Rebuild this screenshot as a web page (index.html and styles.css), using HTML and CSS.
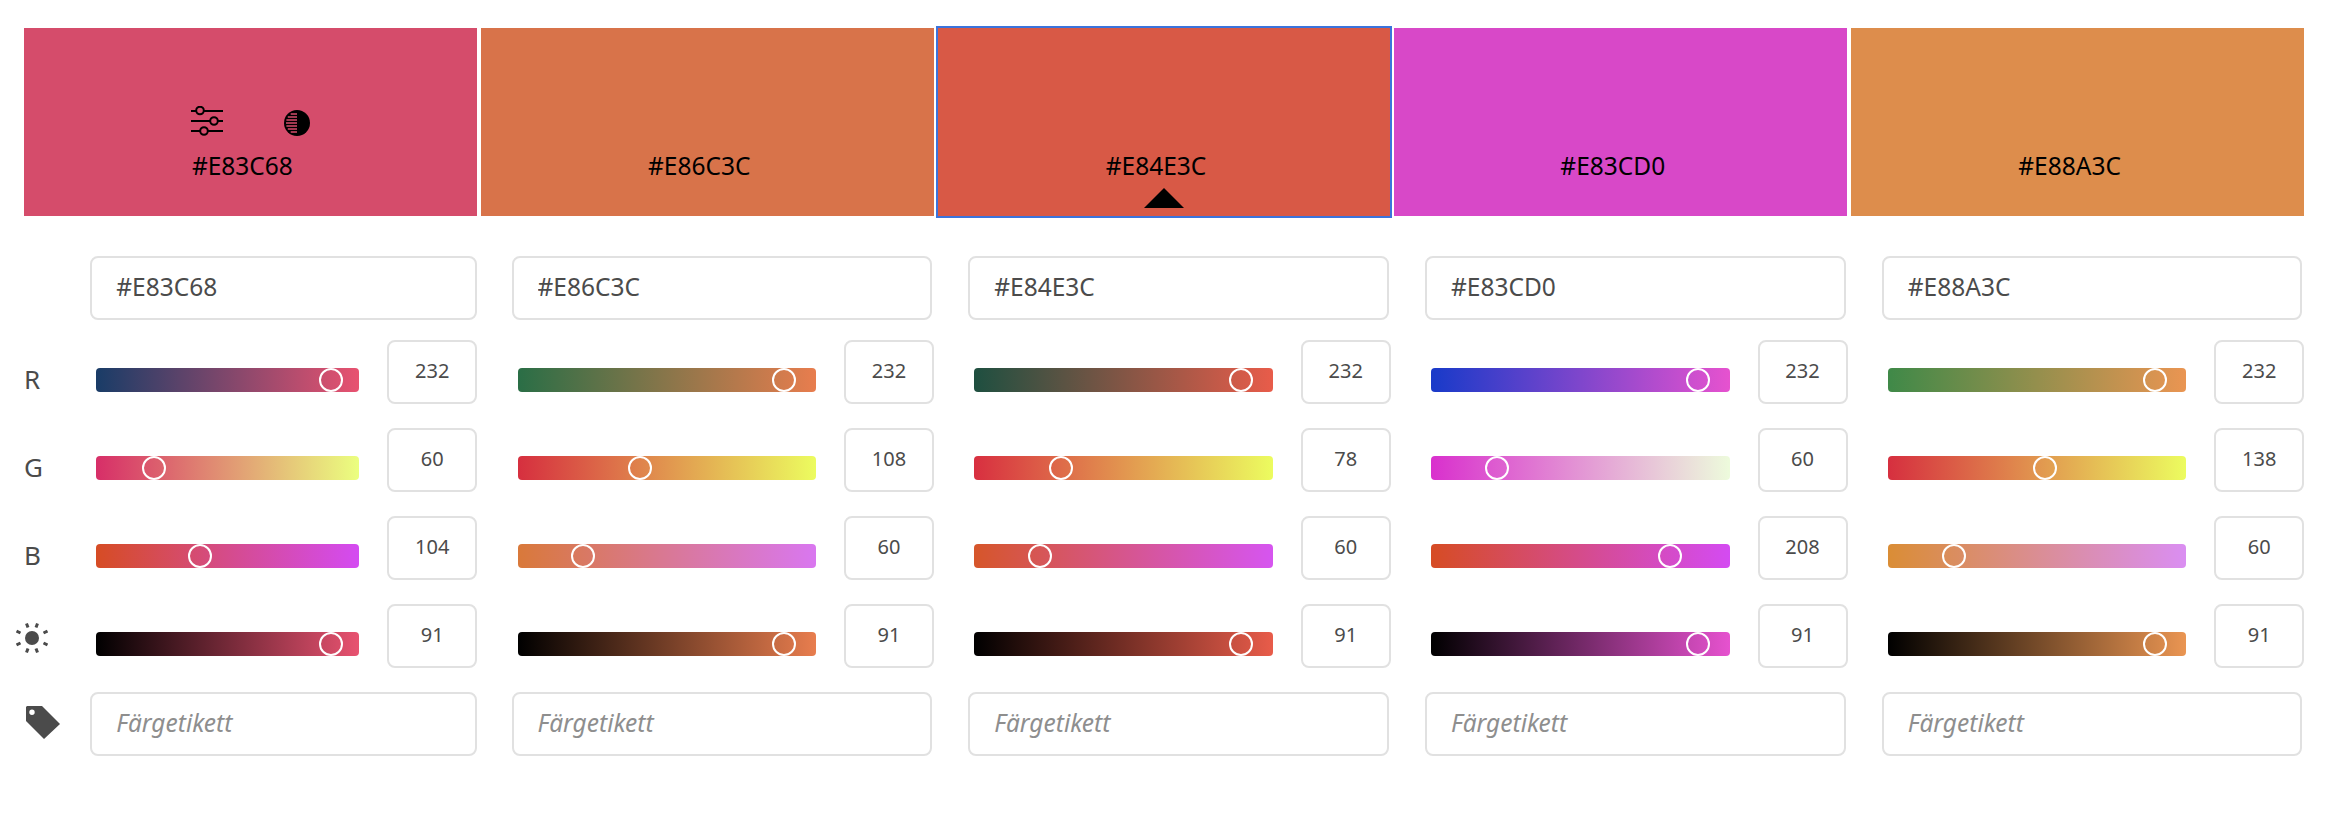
FILE: index.html
```html
<!DOCTYPE html>
<html lang="sv">
<head>
    <meta charset="UTF-8">
    <title>Färgredigerare</title>
    <link rel="stylesheet" href="styles.css">
</head>
<body>
    <div class="swatches">
        <div class="swatch swatch-1">
            <div class="swatch-tools">
                <svg class="tool-icon" width="32" height="30" viewBox="0 0 32 30" fill="none" stroke="#000" stroke-width="2">
                    <path d="M0 5H5M13 5H32M0 15H19M27 15H32M0 25H9M17 25H32"/>
                    <circle cx="9" cy="4.500" r="3.800"/>
                    <circle cx="23" cy="15" r="3.800"/>
                    <circle cx="13" cy="25" r="3.800"/>
                </svg>
                <svg class="tool-icon" width="26" height="26" viewBox="0 0 26 26">
                    <circle cx="13" cy="13" r="13" fill="#000"/>
                    <path d="M6.700 4H13M3.800 7H13M2.400 10H13M2 13H13M2.400 16H13M3.800 19H13M6.700 22H13" stroke="#d54c6b" stroke-width="1.700"/>
                </svg>
            </div>
            <span class="swatch-hex">#E83C68</span>
        </div>
        <div class="swatch swatch-2"><span class="swatch-hex">#E86C3C</span></div>
        <div class="swatch swatch-3 selected"><span class="swatch-hex">#E84E3C</span><span class="caret"></span></div>
        <div class="swatch swatch-4"><span class="swatch-hex">#E83CD0</span></div>
        <div class="swatch swatch-5"><span class="swatch-hex">#E88A3C</span></div>
    </div>

    <div class="editor">
        <div class="labels">
            <div class="row row-hex"></div>
            <div class="row label"><span class="letter">R</span></div>
            <div class="row label"><span class="letter">G</span></div>
            <div class="row label"><span class="letter">B</span></div>
            <div class="row label">
                <svg class="sun-icon" width="32" height="32" viewBox="0 0 32 32" fill="#4b4b4b">
                    <circle cx="16" cy="16" r="7"/>
                    <g stroke="#4b4b4b" stroke-width="3">
                        <path d="M10.500 1.500L12 5.500M21.500 1.500L20 5.500M0.500 9L4.500 11M31.500 9L27.500 11M0.500 23L4.500 21M31.500 23L27.500 21M10.500 30.500L12 26.500M21.500 30.500L20 26.500"/>
                    </g>
                </svg>
            </div>
            <div class="row label">
                <svg class="tag-icon" width="34" height="34" viewBox="0 0 34 34">
                    <path fill="#4b4b4b" fill-rule="evenodd" d="M1 0H16L34 18L18 33L0 15V1ZM6 3.500A2.700 2.700 0 1 0 6 8.900A2.700 2.700 0 1 0 6 3.500Z"/>
                </svg>
            </div>
        </div>

        <div class="col col-1">
            <div class="row row-hex"><input class="field" type="text" value="#E83C68"></div>
            <div class="row"><div class="track r"><span class="thumb" style="left: 89.4%"></span></div><div class="value">232</div></div>
            <div class="row"><div class="track g"><span class="thumb" style="left: 22.1%"></span></div><div class="value">60</div></div>
            <div class="row"><div class="track b"><span class="thumb" style="left: 39.3%"></span></div><div class="value">104</div></div>
            <div class="row"><div class="track l"><span class="thumb" style="left: 89.4%"></span></div><div class="value">91</div></div>
            <div class="row"><input class="field" type="text" placeholder="Färgetikett"></div>
        </div>

        <div class="col col-2">
            <div class="row row-hex"><input class="field" type="text" value="#E86C3C"></div>
            <div class="row"><div class="track r"><span class="thumb" style="left: 89.4%"></span></div><div class="value">232</div></div>
            <div class="row"><div class="track g"><span class="thumb" style="left: 40.9%"></span></div><div class="value">108</div></div>
            <div class="row"><div class="track b"><span class="thumb" style="left: 22.1%"></span></div><div class="value">60</div></div>
            <div class="row"><div class="track l"><span class="thumb" style="left: 89.4%"></span></div><div class="value">91</div></div>
            <div class="row"><input class="field" type="text" placeholder="Färgetikett"></div>
        </div>

        <div class="col col-3">
            <div class="row row-hex"><input class="field" type="text" value="#E84E3C"></div>
            <div class="row"><div class="track r"><span class="thumb" style="left: 89.4%"></span></div><div class="value">232</div></div>
            <div class="row"><div class="track g"><span class="thumb" style="left: 29.1%"></span></div><div class="value">78</div></div>
            <div class="row"><div class="track b"><span class="thumb" style="left: 22.1%"></span></div><div class="value">60</div></div>
            <div class="row"><div class="track l"><span class="thumb" style="left: 89.4%"></span></div><div class="value">91</div></div>
            <div class="row"><input class="field" type="text" placeholder="Färgetikett"></div>
        </div>

        <div class="col col-4">
            <div class="row row-hex"><input class="field" type="text" value="#E83CD0"></div>
            <div class="row"><div class="track r"><span class="thumb" style="left: 89.4%"></span></div><div class="value">232</div></div>
            <div class="row"><div class="track g"><span class="thumb" style="left: 22.1%"></span></div><div class="value">60</div></div>
            <div class="row"><div class="track b"><span class="thumb" style="left: 80%"></span></div><div class="value">208</div></div>
            <div class="row"><div class="track l"><span class="thumb" style="left: 89.4%"></span></div><div class="value">91</div></div>
            <div class="row"><input class="field" type="text" placeholder="Färgetikett"></div>
        </div>

        <div class="col col-5">
            <div class="row row-hex"><input class="field" type="text" value="#E88A3C"></div>
            <div class="row"><div class="track r"><span class="thumb" style="left: 89.4%"></span></div><div class="value">232</div></div>
            <div class="row"><div class="track g"><span class="thumb" style="left: 52.6%"></span></div><div class="value">138</div></div>
            <div class="row"><div class="track b"><span class="thumb" style="left: 22.1%"></span></div><div class="value">60</div></div>
            <div class="row"><div class="track l"><span class="thumb" style="left: 89.4%"></span></div><div class="value">91</div></div>
            <div class="row"><input class="field" type="text" placeholder="Färgetikett"></div>
        </div>
    </div>
</body>
</html>
```

FILE: styles.css
```css
body {
    margin: 0;
    padding: 28px 24px 0;
    background-color: #fff;
    color: #4b4b4b;
    font-family: "Noto Sans", Arial, sans-serif;
}

.swatches {
    display: grid;
    grid-template-columns: repeat(5, 1fr);
    gap: 4px;
    margin-bottom: 40px;
}

.swatch {
    position: relative;
    display: flex;
    flex-direction: column;
    align-items: center;
    justify-content: flex-end;
    height: 188px;
    padding-bottom: 35px;
    box-sizing: border-box;
    color: #000;
}

.swatch-hex {
    margin-right: 16px;
    font-size: 24.5px;
    line-height: 30px;
}

.swatch-tools {
    display: flex;
    gap: 61px;
    align-items: flex-end;
    margin-bottom: 15px;
}

.tool-icon {
    display: block;
}

.swatch-1 { background-color: #d54c6b; }
.swatch-2 { background-color: #d8734a; }
.swatch-3 { background-color: #d85946; }
.swatch-4 { background-color: #d848c8; }
.swatch-5 { background-color: #dd8d4c; }

.selected {
    outline: 2px solid #3b73dc;
}

.caret {
    position: absolute;
    left: 50%;
    bottom: 8px;
    margin-left: -20px;
    border-left: 20px solid transparent;
    border-right: 20px solid transparent;
    border-bottom: 20px solid #000;
}

.editor {
    display: grid;
    grid-template-columns: 30px 385px repeat(4, 420.5px);
    column-gap: 36.25px;
}

.col-1 {
    margin-right: -2px;
}

.row {
    display: flex;
    height: 64px;
    margin-bottom: 24px;
}

.row-hex {
    margin-bottom: 20px;
}

.label {
    align-items: center;
    font-size: 26px;
}

.letter {
    margin-top: 13px;
}

.sun-icon {
    flex-shrink: 0;
    margin: 4px 0 0 -8px;
}

.tag-icon {
    flex-shrink: 0;
    margin: 0 0 3px 2px;
}

.field {
    width: 100%;
    height: 64px;
    padding: 0 24px 4px;
    border: 2px solid #e1e1e1;
    border-radius: 8px;
    box-sizing: border-box;
    font-family: inherit;
    font-size: 24.5px;
    color: #4b4b4b;
}

.field::placeholder {
    color: #8e8e8e;
    font-style: italic;
}

.value {
    width: 90px;
    height: 64px;
    margin-right: -2px;
    padding-bottom: 4px;
    border: 2px solid #e1e1e1;
    border-radius: 8px;
    box-sizing: border-box;
    display: flex;
    align-items: center;
    justify-content: center;
    font-size: 20px;
}

.col-1 .value {
    margin-right: 0;
}

.track {
    position: relative;
    flex: 1;
    align-self: flex-end;
    height: 24px;
    margin: 0 28px 12px 6px;
    border-radius: 4px;
}

.thumb {
    position: absolute;
    top: 0;
    width: 24px;
    height: 24px;
    margin-left: -12px;
    border: 2px solid #fff;
    border-radius: 50%;
    box-sizing: border-box;
}

.col-1 .r { background: linear-gradient(to right, #193c67, #e85270); }
.col-1 .g { background: linear-gradient(to right, #d72e68, #ebff7f); }
.col-1 .b { background: linear-gradient(to right, #d64c24, #d44bf2); }
.col-1 .l { background: linear-gradient(to right, #000, #e85270); }

.col-2 .r { background: linear-gradient(to right, #2a6e46, #e87d4e); }
.col-2 .g { background: linear-gradient(to right, #d62f3f, #ecfc5f); }
.col-2 .b { background: linear-gradient(to right, #d9793a, #d977f0); }
.col-2 .l { background: linear-gradient(to right, #000, #e87d4e); }

.col-3 .r { background: linear-gradient(to right, #1e4f40, #e85c4a); }
.col-3 .g { background: linear-gradient(to right, #d82f40, #ecfc5f); }
.col-3 .b { background: linear-gradient(to right, #d6562a, #d655f0); }
.col-3 .l { background: linear-gradient(to right, #000, #e85c4a); }

.col-4 .r { background: linear-gradient(to right, #183ac9, #e652cf); }
.col-4 .g { background: linear-gradient(to right, #d930cd, #edfbdc); }
.col-4 .b { background: linear-gradient(to right, #d64c24, #d44bf2); }
.col-4 .l { background: linear-gradient(to right, #000, #e652cf); }

.col-5 .r { background: linear-gradient(to right, #3f8948, #ea9552); }
.col-5 .g { background: linear-gradient(to right, #d62f3f, #ecfc5f); }
.col-5 .b { background: linear-gradient(to right, #da8d35, #da8ef2); }
.col-5 .l { background: linear-gradient(to right, #000, #ea9552); }
```
